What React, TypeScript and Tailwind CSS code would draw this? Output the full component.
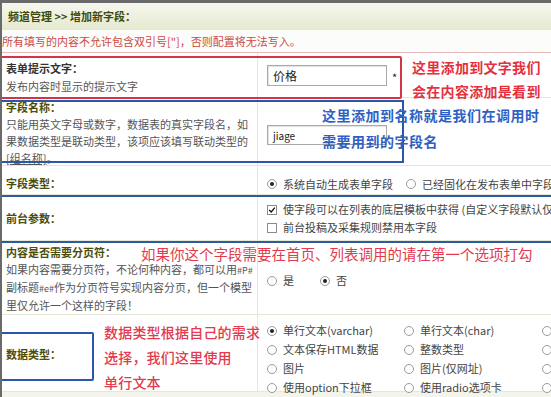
import React from "react";

const FONT = { fontFamily: '"Noto Sans CJK SC", "Noto Sans", sans-serif' };

function Radio({ checked = false }: { checked?: boolean }) {
  return (
    <span className="inline-flex h-[10px] w-[10px] shrink-0 items-center justify-center rounded-full border border-[#9a9a9a] bg-white">
      {checked && <span className="h-[4px] w-[4px] rounded-full bg-[#222]" />}
    </span>
  );
}

function Check({ checked = false }: { checked?: boolean }) {
  return (
    <span className="inline-flex h-[10px] w-[10px] shrink-0 items-center justify-center border border-[#8a8a8a] bg-white">
      {checked && (
        <svg viewBox="0 0 10 10" className="h-[8px] w-[8px]">
          <path d="M1.5 5 L4 7.5 L8.5 2" fill="none" stroke="#111" strokeWidth="1.6" />
        </svg>
      )}
    </span>
  );
}

function Option({ label, checked = false }: { label: string; checked?: boolean }) {
  return (
    <div className="flex items-center gap-[6px] whitespace-nowrap">
      <Radio checked={checked} />
      <span>{label}</span>
    </div>
  );
}

function Row({
  h,
  left,
  right,
  leftClass = "",
  rightClass = "",
}: {
  h: string;
  left: React.ReactNode;
  right: React.ReactNode;
  leftClass?: string;
  rightClass?: string;
}) {
  return (
    <div className={`flex border-b border-[#e4e8d6] ${h}`}>
      <div className={`w-[256px] shrink-0 border-r border-[#e4e8d6] pl-[4px] pr-[4px] ${leftClass}`}>{left}</div>
      <div className={`min-w-0 flex-1 pl-[9px] ${rightClass}`}>{right}</div>
    </div>
  );
}

const labelCls = "font-bold text-[#4d4d0a]";

export default function App() {
  return (
    <div
      className="relative h-[397px] w-[551px] overflow-hidden border-l-2 border-t-[3px] border-[#6a6a6a] bg-white text-[11px] leading-[17px] text-[#444]"
      style={FONT}
    >
      {/* header */}
      <div className="flex h-[27px] items-center bg-gradient-to-b from-[#f5f7ee] to-[#e5eacf] pl-[6px] font-bold text-[#3d4a0c]">
        频道管理 &gt;&gt; 增加新字段：
      </div>

      {/* notice */}
      <div className="flex h-[23px] items-center border-b border-[#e7b9bb] bg-[#fcfcfa] text-[#cc4a44]">
        所有填写的内容不允许包含双引号["]，否则配置将无法写入。
      </div>

      <Row
        h="h-[45px]"
        leftClass="pt-[6px]"
        left={
          <>
            <div className={`${labelCls} leading-[18px] text-[#333]`}>表单提示文字：</div>
            <div className="leading-[18px] text-[#555]">发布内容时显示的提示文字</div>
          </>
        }
        rightClass="flex items-center pl-[3px]"
        right={
          <>
            <div className="flex h-[21px] w-[120px] items-center border border-[#a9a9a9] bg-white pl-[5px] text-[12px] text-[#222] shadow-[inset_1px_1px_1px_rgba(0,0,0,0.12)]">
              价格
            </div>
            <span className="ml-[5px] pt-[5px] text-[#222]">*</span>
          </>
        }
      />

      <Row
        h="h-[68px]"
        leftClass="pt-[1px]"
        left={
          <>
            <div className={labelCls}>字段名称：</div>
            <div className="text-[#555]">
              只能用英文字母或数字，数据表的真实字段名，如果数据类型是联动类型，该项应该填写联动类型的
              <span className="underline">[组名称]</span>。
            </div>
          </>
        }
        rightClass="flex items-start pl-[3px] pt-[27px]"
        right={
          <div className="flex h-[20px] w-[120px] items-center border border-[#a9a9a9] bg-white pl-[5px] text-[10px] text-[#222] shadow-[inset_1px_1px_1px_rgba(0,0,0,0.12)]">
            jiage
          </div>
        }
      />

      <Row
        h="h-[29px]"
        leftClass="flex items-center pt-[6px]"
        left={<div className={labelCls}>字段类型：</div>}
        rightClass="flex items-center pt-[8px]"
        right={
          <div className="flex">
            <div className="w-[139px]">
              <Option label="系统自动生成表单字段" checked />
            </div>
            <Option label="已经固化在发布表单中字段" />
          </div>
        }
      />

      <Row
        h="h-[46px]"
        leftClass="flex items-center pt-[2px]"
        left={<div className={labelCls}>前台参数：</div>}
        rightClass="flex flex-col pt-[6px]"
        right={
          <>
            <div className="flex items-center gap-[6px] whitespace-nowrap">
              <Check checked />
              <span>使字段可以在列表的底层模板中获得 (自定义字段默认仅</span>
            </div>
            <div className="mt-[1px] flex items-center gap-[6px] whitespace-nowrap">
              <Check />
              <span>前台投稿及采集规则禁用本字段</span>
            </div>
          </>
        }
      />

      <Row
        h="h-[74px]"
        leftClass="pt-[3px]"
        left={
          <>
            <div className={labelCls}>内容是否需要分页符：</div>
            <div className="whitespace-nowrap text-[#555]">
              <div>
                如果内容需要分页符，不论何种内容，都可以用<span className="text-[9px]">#P#</span>
              </div>
              <div>
                副标题<span className="text-[9px]">#e#</span>作为分页符号实现内容分页，但一个模型
              </div>
              <div>里仅允许一个这样的字段！</div>
            </div>
          </>
        }
        rightClass="pt-[31px]"
        right={
          <div className="flex">
            <div className="w-[53px]">
              <Option label="是" />
            </div>
            <Option label="否" checked />
          </div>
        }
      />

      <Row
        h="h-[77px]"
        leftClass="flex items-center"
        left={<div className={`${labelCls} pt-[2px]`}>数据类型：</div>}
        rightClass="pt-[7px] pl-[9px]"
        right={
          <div className="grid grid-cols-[137px_138px_40px] gap-y-[2px]">
            <Option label="单行文本(varchar)" checked />
            <Option label="单行文本(char)" />
            <Option label="" />
            <Option label="文本保存HTML数据" />
            <Option label="整数类型" />
            <Option label="" />
            <Option label="图片" />
            <Option label="图片(仅网址)" />
            <Option label="" />
            <Option label="使用option下拉框" />
            <Option label="使用radio选项卡" />
            <Option label="" />
          </div>
        }
      />
      <div className="h-[10px] bg-[#f3f5eb]" />

      {/* annotations drawn over the form */}
      <div className="absolute left-[-2px] top-[53px] h-[43px] w-[402px] rounded-[2px] border-2 border-[#d23646]" />
      <div className="absolute left-[410px] top-[52px] font-bold text-[14px] leading-[24px] tracking-[0.3px] text-[#e5303e]">
        <div>这里添加到文字我们</div>
        <div>会在内容添加是看到</div>
      </div>

      <div className="absolute left-[-2px] top-[97px] h-[63px] w-[404px] border-2 border-[#2b58a6]" />
      <div className="absolute left-[320px] top-[99px] font-bold text-[14px] leading-[26px] tracking-[0.5px] text-[#2f5fc4]">
        <div>这里添加到名称就是我们在调用时</div>
        <div>需要用到的字段名</div>
      </div>

      <div className="absolute left-0 top-[192px] h-[2px] w-full bg-[#2f5aa0]" />
      <div className="absolute left-0 top-[238px] h-[2px] w-full bg-[#2f5aa0]" />

      <div className="absolute left-[139px] top-[241px] text-[14.5px] leading-[20px] text-[#e23a4e]">
        如果你这个字段需要在首页、列表调用的请在第一个选项打勾
      </div>

      <div className="absolute left-[-2px] top-[329px] h-[49px] w-[94px] rounded-[2px] border-2 border-[#2b58a6]" />
      <div className="absolute left-[102px] top-[317px] text-[14px] font-medium leading-[25px] tracking-[0.2px] text-[#e23a4e]">
        <div>数据类型根据自己的需求</div>
        <div>选择，我们这里使用</div>
        <div>单行文本</div>
      </div>
    </div>
  );
}
